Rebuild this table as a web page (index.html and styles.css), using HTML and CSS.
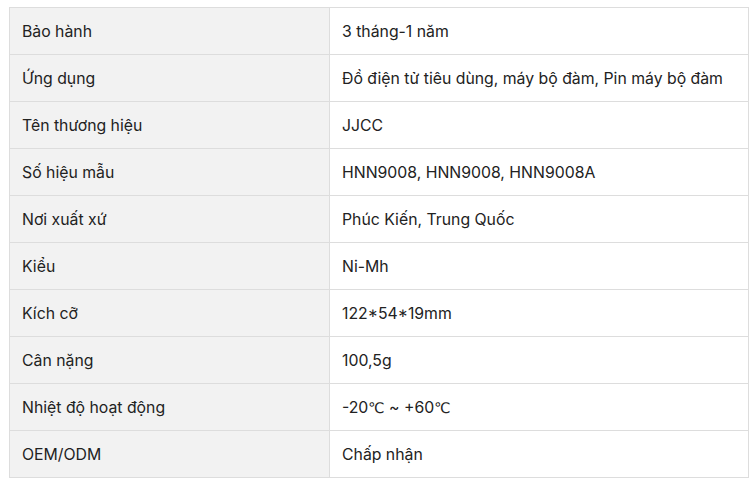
FILE: index.html
```html
<!DOCTYPE html>
<html lang="vi">
<head>
<meta charset="utf-8">
<link rel="stylesheet" href="styles.css">
</head>
<body>
<div class="wrap">
<table class="spec">
<tbody>
<tr><td class="k">Bảo hành</td><td class="v">3 tháng-1 năm</td></tr>
<tr><td class="k">Ứng dụng</td><td class="v">Đồ điện tử tiêu dùng, máy bộ đàm, Pin máy bộ đàm</td></tr>
<tr><td class="k">Tên thương hiệu</td><td class="v">JJCC</td></tr>
<tr><td class="k">Số hiệu mẫu</td><td class="v">HNN9008, HNN9008, HNN9008A</td></tr>
<tr><td class="k">Nơi xuất xứ</td><td class="v">Phúc Kiến, Trung Quốc</td></tr>
<tr><td class="k">Kiểu</td><td class="v">Ni-Mh</td></tr>
<tr><td class="k">Kích cỡ</td><td class="v">122*54*19mm</td></tr>
<tr><td class="k">Cân nặng</td><td class="v">100,5g</td></tr>
<tr><td class="k">Nhiệt độ hoạt động</td><td class="v">-20<span class="deg">℃</span> ~ +60<span class="deg">℃</span></td></tr>
<tr><td class="k">OEM/ODM</td><td class="v">Chấp nhận</td></tr>
</tbody>
</table>
</div>
</body>
</html>
```
FILE: styles.css
```css
html, body {
  margin: 0;
  padding: 0;
  background: #fff;
}
.wrap {
  padding: 7px 0 0 9px;
}
.spec {
  border-collapse: collapse;
  width: 740px;
  font-family: Inter, "Noto Sans", sans-serif;
  font-size: 15.8px;
  color: #222;
  table-layout: fixed;
}
.spec td {
  border: 1px solid #ddd;
  height: 46px;
  padding: 0 12px;
  box-sizing: border-box;
  vertical-align: middle;
  white-space: nowrap;
}
.spec tr {
  height: 47px;
}
.spec .k {
  width: 320px;
  background: #f2f2f2;
}
.spec .v {
  background: #fff;
}
.deg {
  font-family: "DejaVu Sans", sans-serif;
  font-size: 14.5px;
}
```
